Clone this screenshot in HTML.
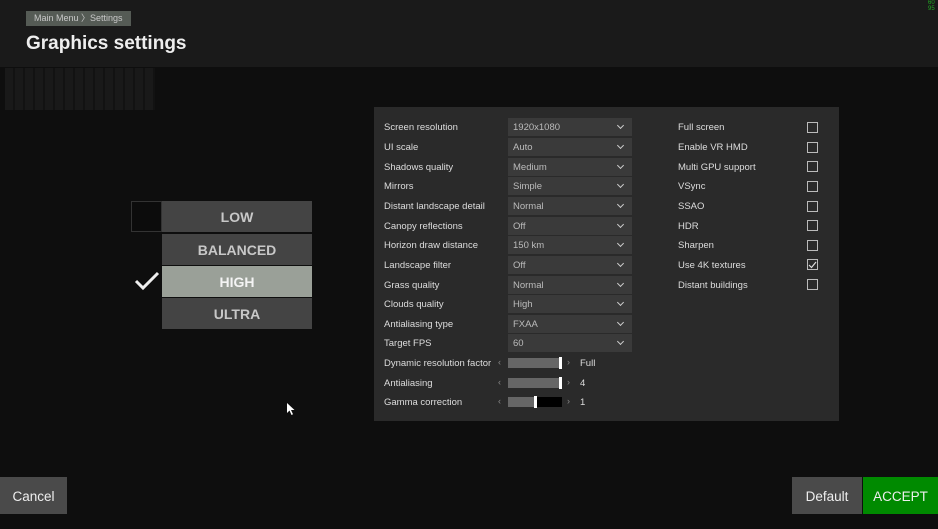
<!DOCTYPE html>
<html><head><style>
*{margin:0;padding:0;box-sizing:border-box}
body{width:938px;height:529px;overflow:hidden;background:#0e0e0e;font-family:"Liberation Sans","DejaVu Sans",sans-serif;color:#ddd;position:relative}
.hdr{position:absolute;left:0;top:0;width:938px;height:67px;background:#1a1a1a}
.crumb{position:absolute;left:26px;top:11px;height:15px;background:#555b55;color:#c8c8c8;font-size:9px;line-height:15px;padding:0 8px}
.title{position:absolute;left:26px;top:33px;font-size:19px;font-weight:bold;color:#eee}
.grid{position:absolute;left:5px;top:68px;width:150px;height:42px;background:repeating-linear-gradient(90deg,#1c1c1c 0 8px,#131313 8px 10px);opacity:.8}
.panel{position:absolute;left:374px;top:107px;width:465px;height:314px;background:#2a2a2a}
.lbl{position:absolute;left:384px;font-size:9.5px;color:#ddd;height:18px;line-height:20px}
.dd{position:absolute;left:508px;width:124px;height:18px;background:#3a3a3a;font-size:9.5px;color:#bbb;line-height:20px;padding-left:5px}
.dd:after{content:"";position:absolute;right:9px;top:5px;width:4px;height:4px;border-right:1.3px solid #ccc;border-bottom:1.3px solid #ccc;transform:rotate(45deg)}
.rl{position:absolute;left:678px;font-size:9.5px;color:#ddd;height:18px;line-height:20px}
.cb{position:absolute;left:807px;width:11px;height:11px;border:1px solid #bbb}
.pb{position:absolute;left:162px;width:150px;height:31px;background:#444;color:#c8c8c8;font-size:14px;font-weight:bold;text-align:center;line-height:33px}
.sl{position:absolute;left:508px;width:54px;height:10px;background:#666}
.ar{position:absolute;font-size:9px;color:#888}
.val{position:absolute;left:580px;font-size:9.5px;color:#ddd}
.btn{position:absolute;top:477px;height:37px;line-height:39px;font-size:13.5px;text-align:center;color:#eee}
</style></head><body>
<div class="hdr"></div>
<div class="grid"></div>
<div class="crumb">Main Menu 〉Settings</div>
<div class="title">Graphics settings</div>

<div style="position:absolute;left:131px;top:201px;width:31px;height:31px;border:1px solid #333;background:#0c0c0c"></div>
<div class="pb" style="top:201px">LOW</div>
<div class="pb" style="top:234px">BALANCED</div>
<div class="pb" style="top:266px;background:#9aa098;color:#f4f4f4">HIGH</div>
<div class="pb" style="top:298px">ULTRA</div>
<svg style="position:absolute;left:134px;top:271px" width="26" height="20"><path d="M2 10 L9 17 L24 2" stroke="#eee" stroke-width="3" fill="none"/></svg>

<div class="panel"></div>
<div class="lbl" style="top:118px">Screen resolution</div><div class="dd" style="top:118px">1920x1080</div>
<div class="lbl" style="top:138px">UI scale</div><div class="dd" style="top:138px">Auto</div>
<div class="lbl" style="top:158px">Shadows quality</div><div class="dd" style="top:158px">Medium</div>
<div class="lbl" style="top:177px">Mirrors</div><div class="dd" style="top:177px">Simple</div>
<div class="lbl" style="top:197px">Distant landscape detail</div><div class="dd" style="top:197px">Normal</div>
<div class="lbl" style="top:217px">Canopy reflections</div><div class="dd" style="top:217px">Off</div>
<div class="lbl" style="top:236px">Horizon draw distance</div><div class="dd" style="top:236px">150 km</div>
<div class="lbl" style="top:256px">Landscape filter</div><div class="dd" style="top:256px">Off</div>
<div class="lbl" style="top:276px">Grass quality</div><div class="dd" style="top:276px">Normal</div>
<div class="lbl" style="top:295px">Clouds quality</div><div class="dd" style="top:295px">High</div>
<div class="lbl" style="top:315px">Antialiasing type</div><div class="dd" style="top:315px">FXAA</div>
<div class="lbl" style="top:334px">Target FPS</div><div class="dd" style="top:334px">60</div>
<div class="lbl" style="top:354px">Dynamic resolution factor</div>
<div class="lbl" style="top:374px">Antialiasing</div>
<div class="lbl" style="top:393px">Gamma correction</div>

<div class="ar" style="left:498px;top:357px">‹</div><div class="sl" style="top:358px"></div><div style="position:absolute;left:559px;top:357px;width:3px;height:12px;background:#fff"></div><div class="ar" style="left:567px;top:357px">›</div><div class="val" style="top:358px">Full</div>
<div class="ar" style="left:498px;top:377px">‹</div><div class="sl" style="top:378px"></div><div style="position:absolute;left:559px;top:377px;width:3px;height:12px;background:#fff"></div><div class="ar" style="left:567px;top:377px">›</div><div class="val" style="top:378px">4</div>
<div class="ar" style="left:498px;top:396px">‹</div><div class="sl" style="top:397px;background:linear-gradient(90deg,#666 0 27px,#000 27px)"></div><div style="position:absolute;left:534px;top:396px;width:3px;height:12px;background:#fff"></div><div class="ar" style="left:567px;top:396px">›</div><div class="val" style="top:397px">1</div>

<div class="rl" style="top:118px">Full screen</div><div class="cb" style="top:122px"></div>
<div class="rl" style="top:138px">Enable VR HMD</div><div class="cb" style="top:142px"></div>
<div class="rl" style="top:158px">Multi GPU support</div><div class="cb" style="top:161px"></div>
<div class="rl" style="top:177px">VSync</div><div class="cb" style="top:181px"></div>
<div class="rl" style="top:197px">SSAO</div><div class="cb" style="top:201px"></div>
<div class="rl" style="top:217px">HDR</div><div class="cb" style="top:220px"></div>
<div class="rl" style="top:236px">Sharpen</div><div class="cb" style="top:240px"></div>
<div class="rl" style="top:256px">Use 4K textures</div><div class="cb" style="top:259px"></div>
<svg style="position:absolute;left:808px;top:261px" width="9" height="8"><path d="M1 4 L3.5 6.5 L8 1" stroke="#ddd" stroke-width="1.2" fill="none"/></svg>
<div class="rl" style="top:276px">Distant buildings</div><div class="cb" style="top:279px"></div>

<svg style="position:absolute;left:286px;top:402px" width="10" height="14"><path d="M1 1 L1 11 L3.5 8.5 L5.5 13 L7 12.3 L5 8 L8.5 8 Z" fill="#fff"/></svg>
<div style="position:absolute;left:928px;top:0;font-size:6px;color:#2a2;line-height:6px">60<br>95</div>

<div class="btn" style="left:0;width:67px;background:#4a4a4a">Cancel</div>
<div class="btn" style="left:792px;width:70px;background:#4a4a4a">Default</div>
<div class="btn" style="left:863px;width:75px;background:#008a00">ACCEPT</div>
</body></html>
